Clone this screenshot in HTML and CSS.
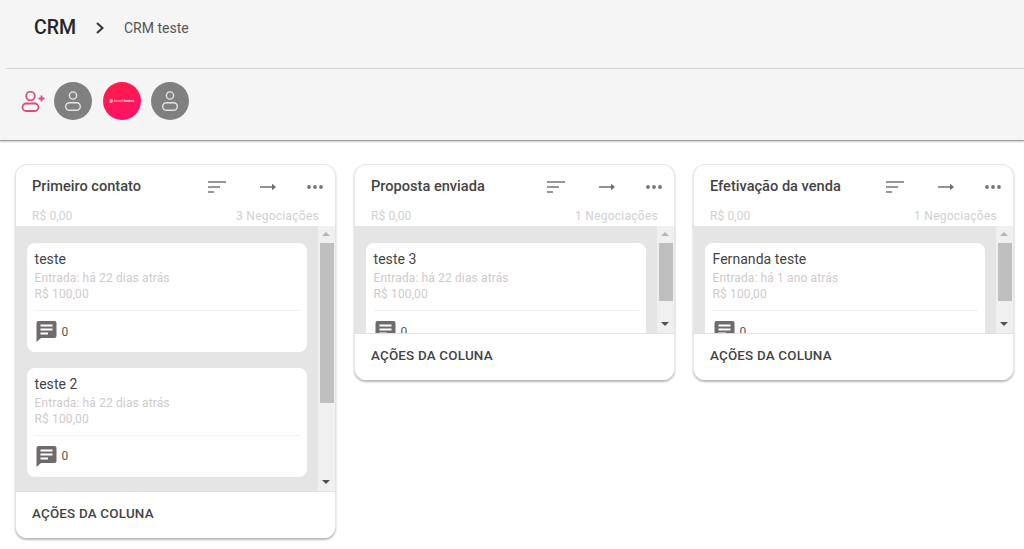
FILE: index.html
```html
<!DOCTYPE html>
<html lang="pt-BR">
<head>
<meta charset="utf-8">
<title>CRM teste</title>
<link rel="stylesheet" href="styles.css">
</head>
<body>
<svg class="defs" width="0" height="0" aria-hidden="true">
  <symbol id="user" viewBox="0 0 24 24">
    <circle cx="12" cy="6.5" r="3.6" fill="none" stroke="currentColor" stroke-width="1.4"/>
    <rect x="4.7" y="13.7" width="14.6" height="7.6" rx="3.8" fill="none" stroke="currentColor" stroke-width="1.4"/>
  </symbol>
  <symbol id="sort" viewBox="0 0 20 14">
    <path d="M1 2h18M1 7h12M1 12h6" fill="none" stroke="currentColor" stroke-width="1.6"/>
  </symbol>
  <symbol id="arrow" viewBox="0 0 18 10">
    <path d="M1 5h13" fill="none" stroke="currentColor" stroke-width="1.5"/>
    <path d="M13 1.8 17 5l-4 3.2z" fill="currentColor"/>
  </symbol>
  <symbol id="dots" viewBox="0 0 18 6">
    <circle cx="3" cy="3" r="1.9" fill="currentColor"/>
    <circle cx="9" cy="3" r="1.9" fill="currentColor"/>
    <circle cx="15" cy="3" r="1.9" fill="currentColor"/>
  </symbol>
  <symbol id="comment" viewBox="0 0 20 21">
    <path d="M2 0h16a2 2 0 0 1 2 2v13a2 2 0 0 1-2 2H4.500L0 21V2a2 2 0 0 1 2-2z" fill="currentColor"/>
    <path d="M4 4.500h12M4 8.500h12M4 12.500h7.500" fill="none" stroke="#fff" stroke-width="1.900"/>
  </symbol>
</svg>

<header class="top">
  <div class="crumbs">
    <span class="crumb-main">CRM</span>
    <svg class="chev" viewBox="0 0 10 14" width="10" height="14"><path d="M2 2l5.500 5L2 12" fill="none" stroke="currentColor" stroke-width="2"/></svg>
    <span class="crumb-sub">CRM teste</span>
  </div>
  <div class="members">
    <svg class="add" viewBox="0 0 24 24" width="24" height="24">
      <circle cx="9.500" cy="7" r="4.300" fill="none" stroke="currentColor" stroke-width="1.800"/>
      <rect x="1.500" y="14.500" width="16" height="7.500" rx="3.700" fill="none" stroke="currentColor" stroke-width="1.800"/>
      <path d="M17.500 9.500h6M20.500 6.500v6" fill="none" stroke="currentColor" stroke-width="1.800"/>
    </svg>
    <span class="avatar"><svg width="24" height="24"><use href="#user"/></svg></span>
    <span class="avatar brand"><i class="brand-mark"></i><span class="brand-text">beach<b>lovers</b></span></span>
    <span class="avatar"><svg width="24" height="24"><use href="#user"/></svg></span>
  </div>
</header>

<main class="board">
  <section class="col col-tall">
    <div class="col-head">
      <div class="col-title-row">
        <h2>Primeiro contato</h2>
        <div class="tools">
          <svg class="i-sort"><use href="#sort"/></svg>
          <svg class="i-arrow"><use href="#arrow"/></svg>
          <svg class="i-dots"><use href="#dots"/></svg>
        </div>
      </div>
      <div class="col-meta"><span>R$ 0,00</span><span class="deals">3 Negociações</span></div>
    </div>
    <div class="col-body">
      <div class="cards">
        <article class="card">
          <h3>teste</h3>
          <p>Entrada: há 22 dias atrás</p>
          <p>R$ 100,00</p>
          <div class="card-foot"><svg class="i-comment"><use href="#comment"/></svg><span>0</span></div>
        </article>
        <article class="card">
          <h3>teste 2</h3>
          <p>Entrada: há 22 dias atrás</p>
          <p>R$ 100,00</p>
          <div class="card-foot"><svg class="i-comment"><use href="#comment"/></svg><span>0</span></div>
        </article>
      </div>
      <div class="scroll"><i class="up"></i><div class="track"><div class="thumb thumb-long"></div></div><i class="down"></i></div>
    </div>
    <div class="col-foot">AÇÕES DA COLUNA</div>
  </section>

  <section class="col col-short">
    <div class="col-head">
      <div class="col-title-row">
        <h2>Proposta enviada</h2>
        <div class="tools">
          <svg class="i-sort"><use href="#sort"/></svg>
          <svg class="i-arrow"><use href="#arrow"/></svg>
          <svg class="i-dots"><use href="#dots"/></svg>
        </div>
      </div>
      <div class="col-meta"><span>R$ 0,00</span><span class="deals">1 Negociações</span></div>
    </div>
    <div class="col-body">
      <div class="cards">
        <article class="card">
          <h3>teste 3</h3>
          <p>Entrada: há 22 dias atrás</p>
          <p>R$ 100,00</p>
          <div class="card-foot"><svg class="i-comment"><use href="#comment"/></svg><span>0</span></div>
        </article>
      </div>
      <div class="scroll"><i class="up"></i><div class="track"><div class="thumb thumb-short"></div></div><i class="down"></i></div>
    </div>
    <div class="col-foot">AÇÕES DA COLUNA</div>
  </section>

  <section class="col col-short">
    <div class="col-head">
      <div class="col-title-row">
        <h2>Efetivação da venda</h2>
        <div class="tools">
          <svg class="i-sort"><use href="#sort"/></svg>
          <svg class="i-arrow"><use href="#arrow"/></svg>
          <svg class="i-dots"><use href="#dots"/></svg>
        </div>
      </div>
      <div class="col-meta"><span>R$ 0,00</span><span class="deals">1 Negociações</span></div>
    </div>
    <div class="col-body">
      <div class="cards">
        <article class="card">
          <h3>Fernanda teste</h3>
          <p>Entrada: há 1 ano atrás</p>
          <p>R$ 100,00</p>
          <div class="card-foot"><svg class="i-comment"><use href="#comment"/></svg><span>0</span></div>
        </article>
      </div>
      <div class="scroll"><i class="up"></i><div class="track"><div class="thumb thumb-short"></div></div><i class="down"></i></div>
    </div>
    <div class="col-foot">AÇÕES DA COLUNA</div>
  </section>
</main>
</body>
</html>
```

FILE: styles.css
```css
* { box-sizing: border-box; }
html, body { margin: 0; height: 100%; }
body {
  background: #fff;
  font-family: Roboto, "Liberation Sans", sans-serif;
  color: #424242;
  overflow: hidden;
}
.defs { position: absolute; }

.top {
  height: 141px;
  padding-left: 6px;
  background: #f5f5f5;
  border-bottom: 1px solid #9e9e9e;
  box-shadow: 0 1px 2px rgba(0,0,0,.2);
}
.crumbs {
  height: 69px;
  display: flex;
  align-items: center;
  padding: 0 0 13px 28px;
  border-bottom: 1px solid #d2d2d2;
}
.crumb-main { font-size: 19.500px; font-weight: 500; color: #262626; width: 61px; }
.chev { color: #333; margin-right: 19px; }
.crumb-sub { font-size: 14px; color: #555; }

.members {
  display: flex;
  align-items: center;
  height: 62px;
  padding: 1px 0 0 15px;
}
.add { color: #d94f7c; margin-right: 9px; }
.avatar {
  width: 38px;
  height: 38px;
  border-radius: 50%;
  background: #808080;
  color: #e4e4e4;
  display: flex;
  align-items: center;
  justify-content: center;
  margin-right: 10.500px;
}
.avatar svg { display: block; }
.brand {
  background: linear-gradient(160deg, #ff1f45, #ff0f6c);
  gap: 1px;
}
.brand-mark { width: 4px; height: 4px; border-radius: 50%; background: #f7a6b5; }
.brand-text { font-size: 3.500px; color: #f9c2ce; letter-spacing: .1px; }
.brand-text b { color: #fff; }

.board {
  display: flex;
  align-items: flex-start;
  gap: 18px;
  padding: 23px 0 0 15px;
}
.col {
  width: 321px;
  flex: none;
  display: flex;
  flex-direction: column;
  background: #fff;
  border-radius: 12px;
  border: 1px solid #e4e4e4;
  border-bottom: 0;
  box-shadow: 0 2px 2px rgba(0,0,0,.28);
  overflow: hidden;
}
.col-tall { height: 374px; }
.col-short { height: 216px; }

.col-head { height: 61px; flex: none; padding: 0 11px 0 16px; }
.col-title-row { display: flex; align-items: center; justify-content: space-between; height: 44px; }
.col-title-row h2 { margin: 0 0 2px; font-size: 14.600px; font-weight: 500; color: #444; }
.tools { display: flex; align-items: center; }
.tools svg { display: block; }
.i-sort { width: 20px; height: 14px; color: #757575; margin-right: 32px; }
.i-arrow { width: 18px; height: 10px; color: #6e6e6e; margin-right: 29px; }
.i-dots { width: 18px; height: 6px; color: #757575; }
.col-meta {
  display: flex;
  justify-content: space-between;
  padding-right: 5px;
  font-size: 12px;
  color: #d0d0d0;
  line-height: 14px;
  letter-spacing: .1px;
}
.deals { letter-spacing: .25px; }

.col-body { flex: 1; min-height: 0; display: flex; background: #e5e5e5; }
.cards { flex: 1; min-width: 0; padding: 17px 11px 0; overflow: hidden; }
.card {
  background: #fff;
  border-radius: 8px;
  height: 109px;
  padding: 8px 7px 0 7.500px;
  margin-bottom: 15.500px;
}
.card h3 { margin: 0 0 2px; font-size: 14px; font-weight: 400; line-height: 17px; color: #444; letter-spacing: .05px; }
.card p { margin: 0; font-size: 12px; line-height: 16px; color: #cfcaca; letter-spacing: .13px; }
.card-foot {
  display: flex;
  align-items: center;
  gap: 5px;
  margin-top: 8px;
  padding-top: 10px;
  border-top: 1px solid #f0f0f0;
  font-size: 12px;
  color: #555;
}
.i-comment { width: 21px; height: 21px; color: #6f6b6b; flex: none; margin-left: 1px; }

.scroll {
  width: 17px;
  flex: none;
  background: #f0f0f0;
  display: flex;
  flex-direction: column;
}
.up, .down { height: 17px; flex: none; position: relative; }
.up::after, .down::after {
  content: "";
  position: absolute;
  left: 4px;
  top: 6px;
  border-left: 4px solid transparent;
  border-right: 4px solid transparent;
}
.up::after { border-bottom: 4px solid #b5b5b5; }
.down::after { border-top: 4px solid #505050; }
.track { flex: 1; min-height: 0; padding: 0 1px 0 2px; }
.thumb { background: #bfbfbf; }
.thumb-long { height: 160px; }
.thumb-short { height: 58px; }

.col-foot {
  height: 47px;
  flex: none;
  display: flex;
  align-items: center;
  padding: 0 0 3px 16px;
  background: #fff;
  border-top: 1px solid #e0e0e0;
  font-size: 13.400px;
  font-weight: 500;
  color: #444;
  letter-spacing: .2px;
}
```
